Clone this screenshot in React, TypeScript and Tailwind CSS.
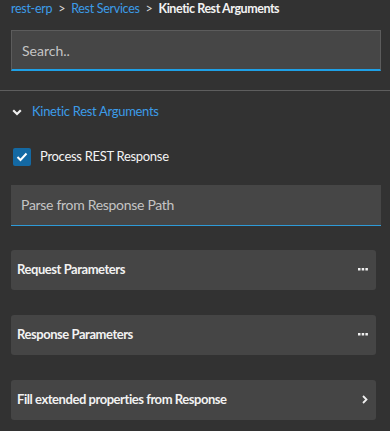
import React from "react";

const FONT = { fontFamily: "Lato, 'Noto Sans', sans-serif" };

function Dots() {
  return (
    <svg width="10" height="3" viewBox="0 0 10 3" className="shrink-0">
      <rect x="0" y="0" width="2.5" height="2.5" fill="#f0f0f0" />
      <rect x="3.7" y="0" width="2.5" height="2.5" fill="#f0f0f0" />
      <rect x="7.4" y="0" width="2.5" height="2.5" fill="#f0f0f0" />
    </svg>
  );
}

function Chevron() {
  return (
    <svg width="6" height="9" viewBox="0 0 6 9" className="shrink-0">
      <path d="M1 1 L4.5 4.5 L1 8" fill="none" stroke="#f0f0f0" strokeWidth="1.8" />
    </svg>
  );
}

function Card({ title, icon }: { title: string; icon: React.ReactNode }) {
  return (
    <div className="h-10 flex items-center justify-between rounded-[3px] bg-[#454545] pl-[6px] pr-[8px]">
      <span className="text-[13px] font-bold tracking-[-0.45px] text-[#f2f2f2]">{title}</span>
      {icon}
    </div>
  );
}

export default function App() {
  return (
    <div className="w-[390px] h-[431px] bg-[#323232] overflow-hidden" style={FONT}>
      <div className="pr-[9px] pl-[11px]">
        {/* Breadcrumb */}
        <div className="h-[30px] flex items-start gap-[5px] text-[12.5px] tracking-[-0.3px]">
          <span className="text-[#3c9ce8]">rest-erp</span>
          <span className="text-[#d8d8d8] px-[1px]">&gt;</span>
          <span className="text-[#3c9ce8]">Rest Services</span>
          <span className="text-[#d8d8d8] px-[1px]">&gt;</span>
          <span className="text-[#f2f2f2] font-bold tracking-[-0.45px]">Kinetic Rest Arguments</span>
        </div>

        {/* Search */}
        <div className="h-[41px] bg-[#464646] border border-[#5c5c5c] border-b-2 border-b-[#1ea0e6] flex items-center px-[10px]">
          <span className="text-[14px] text-[#c4c4c4]">Search..</span>
        </div>
      </div>

      <div className="mt-[19px] h-px bg-[#5e5e5e]" />

      <div className="pl-[11px] pr-[9px]">
        {/* Section header */}
        <div className="mt-[13px] h-[16px] flex items-center gap-[10px] pl-[1px]">
          <svg width="10" height="7" viewBox="0 0 10 7" className="shrink-0">
            <path d="M1.2 1.2 L5 5 L8.8 1.2" fill="none" stroke="#f0f0f0" strokeWidth="2.2" />
          </svg>
          <span className="text-[13px] tracking-[-0.3px] text-[#3c9ce8]">Kinetic Rest Arguments</span>
        </div>

        {/* Checkbox */}
        <div className="mt-[27px] flex items-center gap-[9px] pl-[2px]">
          <div className="w-[18px] h-[18px] rounded-[2px] bg-[#1469a3] flex items-center justify-center">
            <svg width="12" height="10" viewBox="0 0 12 10">
              <path d="M1.5 5 L4.5 8 L10.5 1.5" fill="none" stroke="#ffffff" strokeWidth="2" />
            </svg>
          </div>
          <span className="text-[13px] tracking-[-0.3px] text-[#f4f4f4]">Process REST Response</span>
        </div>

        {/* Path input */}
        <div className="mt-[18px] h-[41px] bg-[#464646] border-b border-b-[#2e9bd8] flex items-center px-[10px]">
          <span className="text-[14px] tracking-[-0.3px] text-[#c4c4c4]">Parse from Response Path</span>
        </div>

        {/* Cards */}
        <div className="mt-[24px] flex flex-col gap-[25px] pr-[5px]">
          <Card title="Request Parameters" icon={<Dots />} />
          <Card title="Response Parameters" icon={<Dots />} />
          <Card title="Fill extended properties from Response" icon={<Chevron />} />
        </div>
      </div>
    </div>
  );
}
